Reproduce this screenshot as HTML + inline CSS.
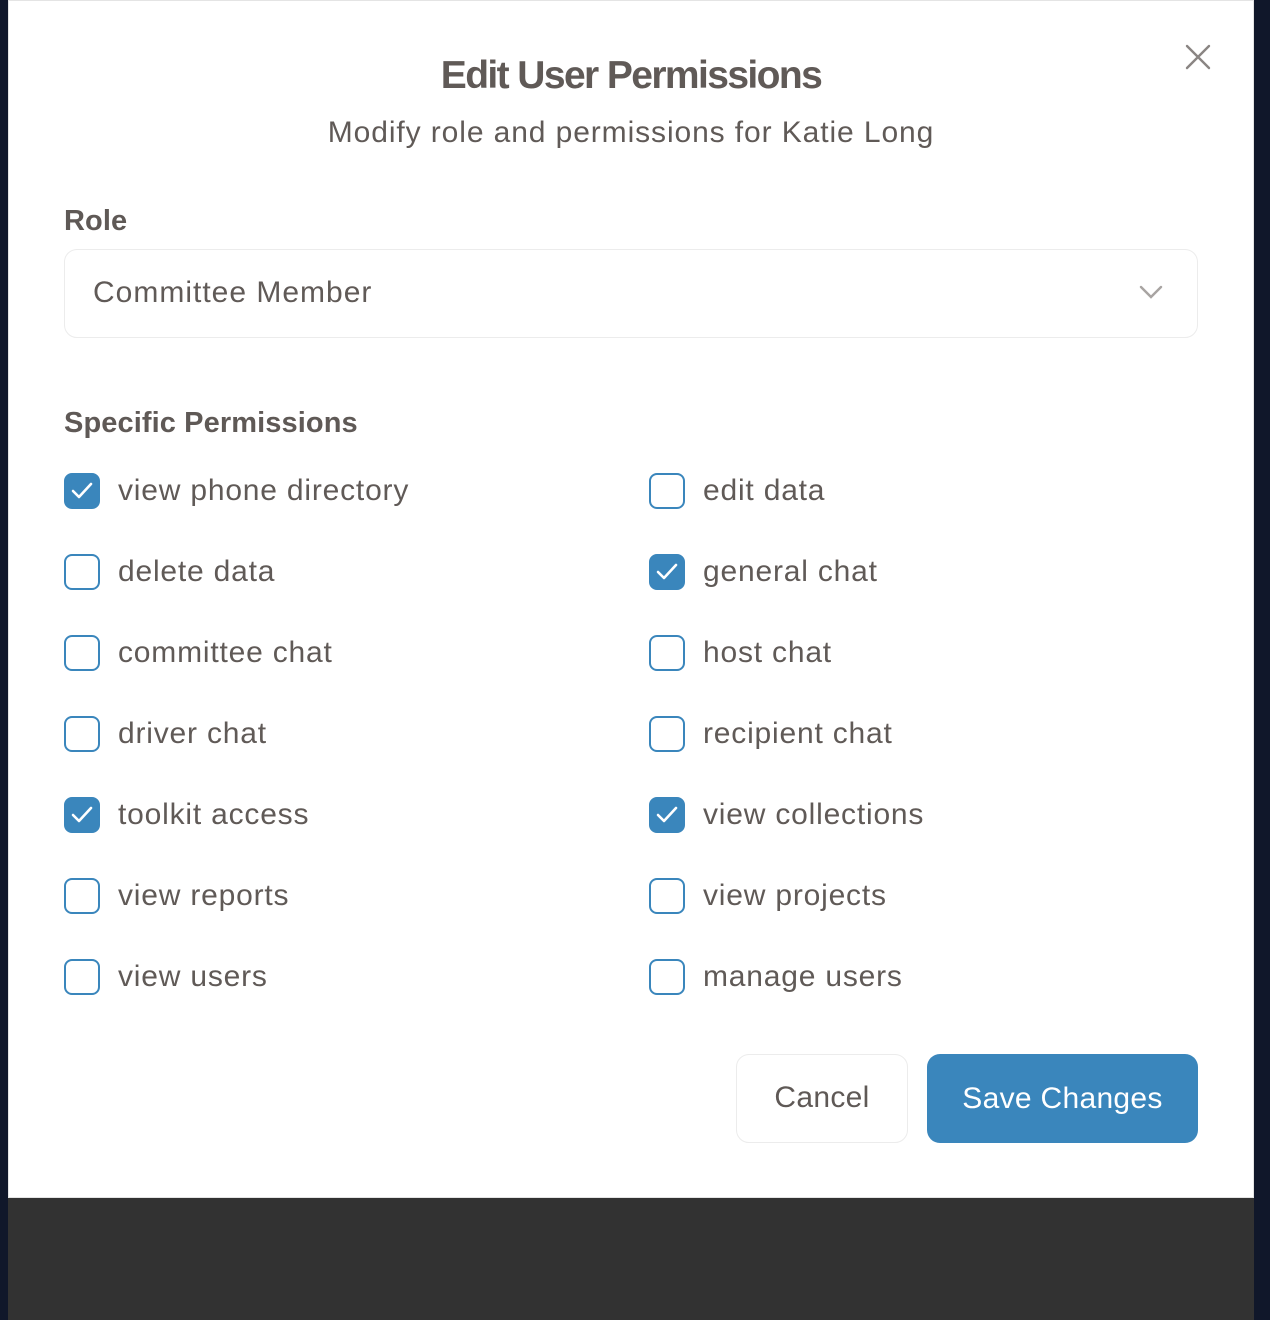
<!DOCTYPE html>
<html><head><meta charset="utf-8"><style>
*{margin:0;padding:0;box-sizing:border-box}
body{width:1270px;height:1320px;background:#10172a;position:relative;overflow:hidden;font-family:"Liberation Sans",sans-serif;color:#605a57}
.bottom{position:absolute;left:8px;top:1198px;width:1246px;height:122px;background:#323232}
.modal{position:absolute;left:8px;top:0;width:1246px;height:1198px;background:#fff;border:1px solid #e4e4e4}
.in{position:absolute;left:-1px;top:0;width:1246px;height:1197px}
.title{position:absolute;left:0;width:1246px;top:52px;text-align:center;font-size:39px;font-weight:bold;letter-spacing:-1.6px;line-height:46px}
.sub{position:absolute;left:0;width:1246px;top:114px;text-align:center;font-size:30px;letter-spacing:0.9px;line-height:36px}
.close{position:absolute;left:1176px;top:42px}
.lbl{position:absolute;left:56px;font-size:29px;font-weight:bold;line-height:36px;color:#5f5956;letter-spacing:0.1px}
.select{position:absolute;left:56px;top:248px;width:1134px;height:89px;border:1.5px solid #ececec;border-radius:13px;font-size:30px;letter-spacing:1px;line-height:86px;padding-left:28px}
.chev{position:absolute;right:34px;top:34px}
.item{position:absolute;height:36px;font-size:30px;letter-spacing:0.8px;line-height:36px}
.cb{position:absolute;left:0;top:0;width:36px;height:36px;border:2px solid #3a86bc;border-radius:8px;background:#fff}
.cb.on{background:#3a86bc}
.cb svg{position:absolute;left:5px;top:6px}
.item span{position:absolute;left:54px;top:0;white-space:nowrap}
.btn{position:absolute;top:1053px;height:89px;border-radius:13px;font-size:30px;text-align:center;line-height:89px;letter-spacing:0.3px}
.cancel{left:728px;width:172px;border:1.5px solid #ececec;color:#5f5956;line-height:86px;font-weight:500}
.save{left:919px;width:271px;background:#3a86bc;color:#fff}
</style></head><body>
<div class="bottom"></div>
<div class="modal"><div class="in">
<div class="title">Edit User Permissions</div>
<div class="sub">Modify role and permissions for Katie Long</div>
<svg class="close" width="28" height="28" viewBox="0 0 28 28"><path d="M3 3L25 25M25 3L3 25" stroke="#8a8583" stroke-width="2.4" stroke-linecap="round"/></svg>
<div class="lbl" style="top:202px">Role</div>
<div class="select">Committee Member<svg class="chev" width="24" height="16" viewBox="0 0 24 16"><path d="M2 3L12 13L22 3" stroke="#a8a4a2" stroke-width="2.4" fill="none" stroke-linecap="round"/></svg></div>
<div class="lbl" style="top:404px">Specific Permissions</div>

<div class="item" style="left:56px;top:472px"><div class="cb on"><svg width="22" height="20" viewBox="0 0 22 20"><path d="M2 10L8 16L20 3" stroke="#fff" stroke-width="2.6" fill="none" stroke-linecap="round" stroke-linejoin="round"/></svg></div><span>view phone directory</span></div>
<div class="item" style="left:641px;top:472px"><div class="cb"></div><span>edit data</span></div>
<div class="item" style="left:56px;top:553px"><div class="cb"></div><span>delete data</span></div>
<div class="item" style="left:641px;top:553px"><div class="cb on"><svg width="22" height="20" viewBox="0 0 22 20"><path d="M2 10L8 16L20 3" stroke="#fff" stroke-width="2.6" fill="none" stroke-linecap="round" stroke-linejoin="round"/></svg></div><span>general chat</span></div>
<div class="item" style="left:56px;top:634px"><div class="cb"></div><span>committee chat</span></div>
<div class="item" style="left:641px;top:634px"><div class="cb"></div><span>host chat</span></div>
<div class="item" style="left:56px;top:715px"><div class="cb"></div><span>driver chat</span></div>
<div class="item" style="left:641px;top:715px"><div class="cb"></div><span>recipient chat</span></div>
<div class="item" style="left:56px;top:796px"><div class="cb on"><svg width="22" height="20" viewBox="0 0 22 20"><path d="M2 10L8 16L20 3" stroke="#fff" stroke-width="2.6" fill="none" stroke-linecap="round" stroke-linejoin="round"/></svg></div><span>toolkit access</span></div>
<div class="item" style="left:641px;top:796px"><div class="cb on"><svg width="22" height="20" viewBox="0 0 22 20"><path d="M2 10L8 16L20 3" stroke="#fff" stroke-width="2.6" fill="none" stroke-linecap="round" stroke-linejoin="round"/></svg></div><span>view collections</span></div>
<div class="item" style="left:56px;top:877px"><div class="cb"></div><span>view reports</span></div>
<div class="item" style="left:641px;top:877px"><div class="cb"></div><span>view projects</span></div>
<div class="item" style="left:56px;top:958px"><div class="cb"></div><span>view users</span></div>
<div class="item" style="left:641px;top:958px"><div class="cb"></div><span>manage users</span></div>

<div class="btn cancel">Cancel</div>
<div class="btn save">Save Changes</div>
</div></div>
</body></html>
